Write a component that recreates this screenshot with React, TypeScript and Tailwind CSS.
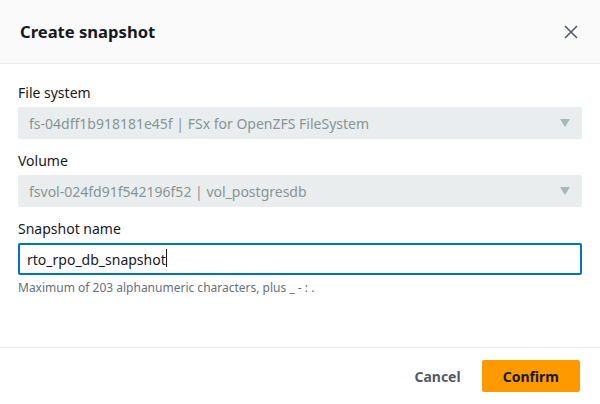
const font = { fontFamily: '"Noto Sans", "Open Sans", sans-serif' };

function Caret() {
  return <span className="inline-block w-px h-[18px] bg-[#16191f] align-middle -mt-[2px]" />;
}

function CloseIcon() {
  return (
    <svg width="16" height="16" viewBox="0 0 16 16" className="shrink-0">
      <path d="M2 2l12 12M14 2L2 14" stroke="#545b64" strokeWidth="1.6" fill="none" />
    </svg>
  );
}

function DisabledSelect({ value }: { value: string }) {
  return (
    <div className="flex h-8 items-center justify-between rounded-[2px] border border-[#eaeded] bg-[#eaeded] pl-[10px] pr-[11px]">
      <span className="text-[14px] text-[#879596]">{value}</span>
      <svg width="10" height="8" viewBox="0 0 10 8">
        <path d="M0 0h10L5 8z" fill="#aab7b8" />
      </svg>
    </div>
  );
}

function FieldLabel({ children }: { children: React.ReactNode }) {
  return <div className="text-[14px] leading-[22px] text-[#16191f] mb-[3px]">{children}</div>;
}

export default function App() {
  return (
    <div className="flex h-screen w-full flex-col bg-white" style={font}>
      {/* Header */}
      <div className="flex h-[64px] shrink-0 items-center justify-between border-b border-[#eaeded] bg-[#fafafa] pl-[20px] pr-[21px]">
        <h2 className="text-[16.6px] font-bold text-[#16191f] pt-px">Create snapshot</h2>
        <CloseIcon />
      </div>

      {/* Body */}
      <div className="flex-1 px-[18px] pt-[18px]">
        <FieldLabel>File system</FieldLabel>
        <DisabledSelect value="fs-04dff1b918181e45f | FSx for OpenZFS FileSystem" />

        <div className="mt-[11px]">
          <FieldLabel>Volume</FieldLabel>
          <DisabledSelect value="fsvol-024fd91f542196f52 | vol_postgresdb" />
        </div>

        <div className="mt-[11px]">
          <FieldLabel>Snapshot name</FieldLabel>
          <div className="flex h-8 items-center rounded-[2px] border-2 border-[#0073bb] pl-[7px]">
            <span className="text-[14px] text-[#16191f]">rto_rpo_db_snapshot</span>
            <Caret />
          </div>
          <div className="mt-[5px] text-[12px] leading-[16px] text-[#687078]">
            Maximum of 203 alphanumeric characters, plus _ - : .
          </div>
        </div>
      </div>

      {/* Footer */}
      <div className="flex h-[57px] shrink-0 items-center justify-end gap-[21px] border-t border-[#eaeded] pr-[20px]">
        <button className="text-[14px] font-bold text-[#545b64]">Cancel</button>
        <button className="h-8 rounded-[2px] bg-[#ff9900] px-[21px] text-[14px] font-bold text-[#16191f]">
          Confirm
        </button>
      </div>
    </div>
  );
}
